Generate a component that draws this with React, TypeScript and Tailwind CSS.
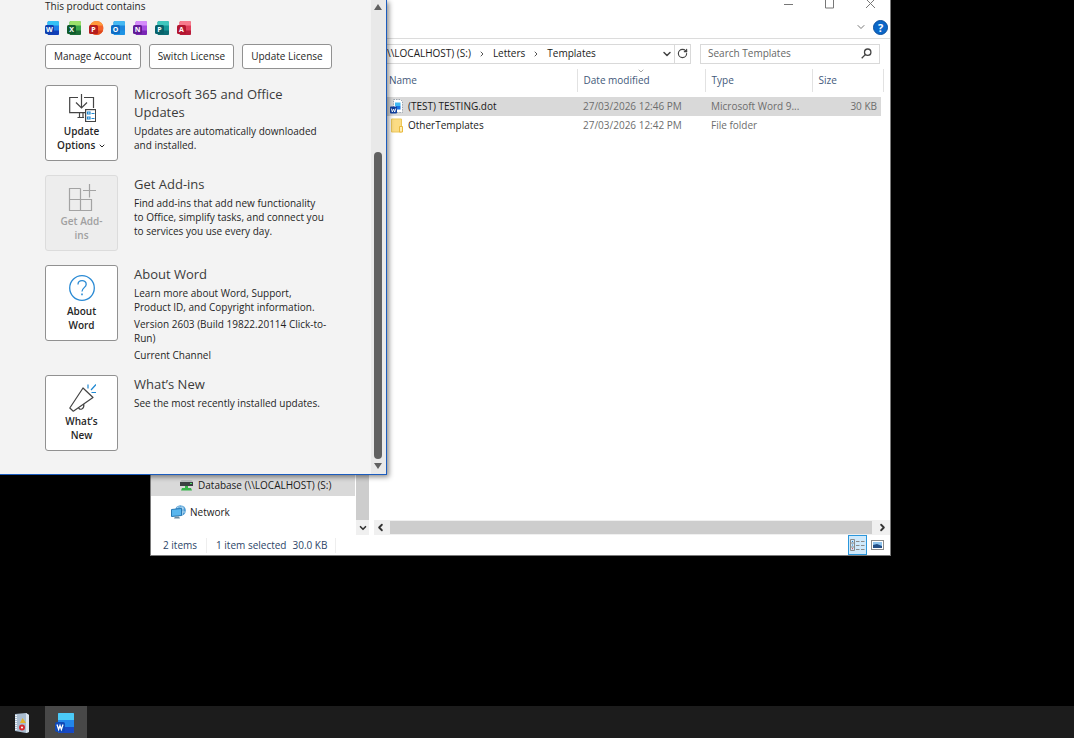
import type { ReactNode } from 'react';
import { ChevronDown, ChevronLeft, ChevronRight, RotateCw } from 'lucide-react';

type OfficeApp = { name: string; letter: string; light: string; mid: string; dark: string; badge: string; round?: boolean };

const officeApps: OfficeApp[] = [
  { name: 'Word', letter: 'W', light: '#35c1f5', mid: '#1f7fe8', dark: '#123fb8', badge: '#0f3fae' },
  { name: 'Excel', letter: 'X', light: '#9be06a', mid: '#3aa94a', dark: '#1b6b35', badge: '#0f5a2b' },
  { name: 'PowerPoint', letter: 'P', light: '#ff9a3d', mid: '#f4622a', dark: '#e04a1e', badge: '#b51d1d', round: true },
  { name: 'Outlook', letter: 'O', light: '#45b8f2', mid: '#1d86dc', dark: '#1e93e4', badge: '#0f6cc4' },
  { name: 'OneNote', letter: 'N', light: '#d48bfa', mid: '#a54ae0', dark: '#7a27b5', badge: '#611b96' },
  { name: 'Publisher', letter: 'P', light: '#3fc7bd', mid: '#159a98', dark: '#0b6c74', badge: '#07626a' },
  { name: 'Access', letter: 'A', light: '#f77a8c', mid: '#e0405c', dark: '#b81c3a', badge: '#b3152f' },
];

function OfficeIcon({ app, className }: { app: OfficeApp; className: string }) {
  const clip = `clip-${app.name}`;
  return (
    <svg viewBox="0 0 16 16" className={className} role="img" aria-label={app.name}>
      <clipPath id={clip}>
        {app.round ? <circle cx="7.500" cy="8" r="7" /> : <rect x="2.500" y="1" width="11.500" height="14" rx="1.500" />}
      </clipPath>
      <g clipPath={`url(#${clip})`}>
        <rect width="16" height="16" fill={app.mid} />
        <rect width="16" height="5.500" fill={app.light} />
        <rect y="10.500" width="16" height="5.500" fill={app.dark} />
      </g>
      <rect x="0" y="5" width="9" height="9" rx="1.500" fill={app.badge} />
      <text x="4.500" y="12.100" textAnchor="middle" fontSize="7" fontWeight="700" fill="#fff" fontFamily="Open Sans, sans-serif">
        {app.letter}
      </text>
    </svg>
  );
}

const UpdateIcon = () => (
  <svg viewBox="0 0 28 28" className="h-7 w-7" fill="none" stroke="#444" strokeWidth="1.200">
    <path d="M10 3.500H1.700v15.200H17M16 3.500h9.500V14M9.500 23.500H16M11.500 19v4.500M15 19v4" />
    <path d="M13.500 0v14M8 8.500l5.500 5.500L19 8.500" />
    <rect x="17.600" y="15.600" width="10" height="12" fill="#fff" />
    <path d="M19.500 18h2.500v2h-2.500zM19.500 23h2.500v2h-2.500zM23.500 19.500h3M23.500 24.500h3" stroke="#1e88d2" />
  </svg>
);

const AddInsIcon = () => (
  <svg viewBox="0 0 28 28" className="h-7 w-7" fill="none" stroke="#a3a3a3" strokeWidth="1.200">
    <path d="M12.500 4.500h-11v22h22v-11h-22M12.500 4.500v22M23.500 15.500v11M21.500 0v13.500M15 6.500h13" />
  </svg>
);

const AboutIcon = () => (
  <svg viewBox="0 0 28 28" className="h-7 w-7" fill="none" stroke="#2a8ad4" strokeWidth="1.300">
    <circle cx="14" cy="14" r="12.300" />
    <path d="M10 10.500c0-5 8.200-5 8.200-.3 0 3.500-4.200 3.400-4.200 7.300" />
    <path d="M14 19.500v1.800" strokeWidth="1.600" />
  </svg>
);

const MegaphoneIcon = () => (
  <svg viewBox="0 0 28 28" className="h-7 w-7" fill="none" stroke="#444" strokeWidth="1.200" strokeLinejoin="round">
    <path d="M15 4L1.800 24l3.500 3.200L25 13.500zM10.500 23.500c1 3.200 6 2 5.300-3.300" />
    <path d="M20 .5v4M23 6l5-5.500M23.500 8.500H28" stroke="#1e88d2" />
  </svg>
);

const tileStyles = {
  normal: 'border-[#919191] bg-white text-[#262626]',
  disabled: 'border-[#dcdcdc] bg-[#ededed] text-[#a0a0a0]',
};

function ProductRow({ icon, label, title, disabled, children }: {
  icon: ReactNode; label: ReactNode; title: ReactNode; disabled?: boolean; children: ReactNode;
}) {
  return (
    <section className="flex items-start gap-4">
      <button
        type="button"
        disabled={disabled}
        className={`flex h-[76px] w-[73px] shrink-0 flex-col items-center rounded-[3px] border pt-2 text-center font-semibold leading-[14px] ${disabled ? tileStyles.disabled : tileStyles.normal}`}
      >
        {icon}
        <span className="mt-[2px]">{label}</span>
      </button>
      <div className="flex min-h-[77px] flex-1 flex-col gap-[3px] whitespace-nowrap leading-[14px]">
        <h2 className="text-[13px] font-medium leading-[18px] text-[#3b3b3b]">{title}</h2>
        {children}
      </div>
    </section>
  );
}

function WordAccountWindow() {
  return (
    <main className="absolute left-0 top-0 flex h-[475px] w-[387px] overflow-hidden border-b border-r border-[#1b5cbe] bg-[#f3f3f3] text-[10px] text-[#1f1f1f] shadow-[2px_2px_5px_rgba(0,0,0,0.45)]">
      <div className="flex-1 pl-[45px]">
        <p className="leading-[13px]">This product contains</p>
        <div className="mt-[7px] flex gap-[6px]">
          {officeApps.map((app) => <OfficeIcon key={app.name} app={app} className="h-4 w-4" />)}
        </div>
        <div className="mt-2 flex gap-2">
          {['Manage Account', 'Switch License', 'Update License'].map((label) => (
            <button key={label} type="button" className="h-[25px] whitespace-nowrap rounded-[3px] border border-[#919191] bg-white px-2">
              {label}
            </button>
          ))}
        </div>
        <div className="mt-4 flex flex-col gap-[13px]">
          <ProductRow
            icon={<UpdateIcon />}
            label={<>Update<br />Options <ChevronDown className="inline h-2 w-2" strokeWidth={3} /></>}
            title={<>Microsoft 365 and Office<br />Updates</>}
          >
            <p>Updates are automatically downloaded<br />and installed.</p>
          </ProductRow>
          <ProductRow icon={<AddInsIcon />} label={<>Get Add-<br />ins</>} title="Get Add-ins" disabled>
            <p>Find add-ins that add new functionality<br />to Office, simplify tasks, and connect you<br />to services you use every day.</p>
          </ProductRow>
          <ProductRow icon={<AboutIcon />} label={<>About<br />Word</>} title="About Word">
            <p>Learn more about Word, Support,<br />Product ID, and Copyright information.</p>
            <p>Version 2603 (Build 19822.20114 Click-to-<br />Run)</p>
            <p>Current Channel</p>
          </ProductRow>
          <ProductRow icon={<MegaphoneIcon />} label={<>What’s<br />New</>} title="What’s New">
            <p>See the most recently installed updates.</p>
          </ProductRow>
        </div>
      </div>
      <div className="flex w-[15px] flex-col items-center bg-[#e9e9e9] pb-[5px] pr-px pt-1">
        <svg viewBox="0 0 8 6" className="h-[6px] w-2" fill="#606060"><path d="M4 0l4 6H0z" /></svg>
        <div className="flex-1" />
        <div className="mb-1 h-[307px] w-2 rounded-full bg-[#606060]" />
        <svg viewBox="0 0 8 6" className="h-[6px] w-2" fill="#606060"><path d="M4 6l4-6H0z" /></svg>
      </div>
    </main>
  );
}

const DotFileIcon = () => (
  <svg viewBox="0 0 14 15" className="h-[15px] w-[14px]">
    <path d="M3.500.5h7l2 2v11h-9z" fill="#fff" stroke="#9aa3ad" strokeDasharray="1.500 1" />
    <rect x="5" y="3.500" width="5.500" height="3.500" fill="#41b9f3" />
    <rect x="6" y="7" width="4.500" height="3.500" fill="#1a73e0" />
    <rect y="7.500" width="7" height="7" rx="1" fill="#103f9f" />
    <path d="M1.300 9.500l1 3.500 1.200-3 1.200 3 1-3.500" fill="none" stroke="#fff" strokeWidth=".9" />
  </svg>
);

const FolderIcon = () => (
  <svg viewBox="0 0 14 15" className="h-[15px] w-[14px]">
    <path d="M1.500 1h10v13h-10z" fill="#fbdc84" stroke="#edc75a" />
    <path d="M9.500 14V8.500h3V14z" fill="#ffeeb5" stroke="#e8b93e" />
  </svg>
);

const DriveIcon = () => (
  <svg viewBox="0 0 13 12" className="h-3 w-[13px]">
    <path d="M1.500 1h10L13 3H0z" fill="#b9bdc0" />
    <rect y="3" width="13" height="4" fill="#3b4043" />
    <rect x="10" y="4" width="2" height="1" fill="#53e36b" />
    <path d="M5 7h3v2h3l1 2.500H1L2 9h3z" fill="#37b34a" />
  </svg>
);

const NetworkIcon = () => (
  <svg viewBox="0 0 15 14" className="h-[14px] w-[15px]">
    <circle cx="9.500" cy="5.500" r="5.300" fill="#4d9bd4" />
    <path d="M6 3c3-3 4 1 7 0M7 8c3-1 4-1 7-1M10 0c3 4 2 7 1 10" stroke="#b8dcf2" fill="none" />
    <path d="M.5 4.500l10-1v7l-10 1z" fill="#58b6ee" stroke="#2879b4" />
    <path d="M3 13.500h6l-1-2H4z" fill="#6b8aa0" />
  </svg>
);

const files = [
  { name: '(TEST) TESTING.dot', date: '27/03/2026 12:46 PM', type: 'Microsoft Word 9...', size: '30 KB', icon: <DotFileIcon />, rowClass: 'bg-[#d9d9d9]' },
  { name: 'OtherTemplates', date: '27/03/2026 12:42 PM', type: 'File folder', size: '', icon: <FolderIcon />, rowClass: '' },
];

function ExplorerToolbar() {
  return (
    <header>
      <div className="flex h-[10px] items-center justify-end gap-[30px] pr-[14px] text-[#777]">
        <button type="button" aria-label="Minimize"><svg viewBox="0 0 11 11" className="h-[11px] w-[11px]" stroke="currentColor"><path d="M1 4.500h9" /></svg></button>
        <button type="button" aria-label="Maximize"><svg viewBox="0 0 11 11" className="h-[11px] w-[11px]" fill="none" stroke="currentColor"><path d="M1.500-1v9h8v-9" /></svg></button>
        <button type="button" aria-label="Close"><svg viewBox="0 0 11 11" className="h-[11px] w-[11px]" stroke="currentColor"><path d="M1-1l9 9M10-1L1 8" /></svg></button>
      </div>
      <div className="flex h-7 items-center justify-end gap-[6px] pr-[2px] pt-[6px]">
        <button type="button" aria-label="Expand the ribbon"><ChevronDown className="h-3 w-3 text-[#777]" strokeWidth={2} /></button>
        <button type="button" aria-label="Help" className="h-[15px] w-[15px] rounded-full border border-[#0a4f9e] bg-[#0b67c8] text-center text-[11px] font-bold leading-[13px] text-white">?</button>
      </div>
      <div className="flex gap-[9px] border-t border-[#dcdcdc] pb-[5px] pr-[10px] pt-[5px]">
        <nav aria-label="Address" className="flex h-5 flex-1 items-center border border-[#d9d9d9] pb-px pl-[235px] text-[#1a1a1a]">
          <span>\\LOCALHOST) (S:)</span>
          <ChevronRight className="mx-[7px] h-2 w-2 text-[#555]" strokeWidth={3} />
          <span>Letters</span>
          <ChevronRight className="mx-[7px] h-2 w-2 text-[#555]" strokeWidth={3} />
          <span>Templates</span>
          <button type="button" aria-label="Previous locations" className="ml-auto mr-px"><ChevronDown className="h-3 w-3 text-[#444]" strokeWidth={3} /></button>
          <button type="button" aria-label="Refresh" className="flex h-[18px] w-4 items-center justify-center border-l border-[#d9d9d9]"><RotateCw className="h-[11px] w-[11px] text-[#444]" strokeWidth={2.5} /></button>
        </nav>
        <label className="flex h-5 w-[180px] items-center border border-[#d9d9d9] px-[7px] pb-px">
          <input aria-label="Search Templates" placeholder="Search Templates" className="w-0 flex-1 bg-transparent outline-none placeholder:text-[#666]" />
          <svg viewBox="0 0 11 11" className="h-[11px] w-[11px]" fill="none" stroke="#444" strokeWidth="1.300"><circle cx="6.700" cy="4.200" r="3.200" /><path d="M4.300 6.600L.7 10.300" /></svg>
        </label>
      </div>
    </header>
  );
}

function FileList() {
  const th = 'relative h-[23px] border-r border-[#e2e2e2] pl-[6px] text-left font-normal';
  return (
    <div className="flex items-start pr-[6px]">
      <table className="flex-1 table-fixed border-collapse">
        <thead className="text-[#43597a]">
          <tr>
            <th className="h-[23px] w-[207px] border-r border-[#e2e2e2] pl-[19px] text-left font-normal">Name</th>
            <th className={`${th} w-32`}>
              Date modified
              <ChevronDown className="absolute left-[59px] top-[-2px] h-2 w-2 text-[#777]" strokeWidth={2} />
            </th>
            <th className={`${th} w-[107px]`}>Type</th>
            <th className="h-[23px] w-[69px] pl-[6px] text-left font-normal">Size</th>
          </tr>
          <tr><td className="h-[5px]" /></tr>
        </thead>
        <tbody className="text-[#6d6d6d]">
          {files.map((file) => (
            <tr key={file.name} className={`h-[19px] ${file.rowClass}`}>
              <td className="pl-5 text-[#1a1a1a]"><span className="flex items-center gap-1">{file.icon}{file.name}</span></td>
              <td className="pl-[6px]">{file.date}</td>
              <td className="pl-[6px]">{file.type}</td>
              <td className="pr-1 text-right">{file.size}</td>
            </tr>
          ))}
        </tbody>
      </table>
      <div className="h-[23px] w-[3px] border-r border-[#e2e2e2]" />
    </div>
  );
}

function ExplorerWindow() {
  return (
    <section aria-label="File Explorer" className="absolute left-[150px] top-0 flex h-[556px] w-[741px] flex-col border-x border-b border-[#7a7a7a] bg-white text-[10px] leading-[15px] text-[#1a1a1a]">
      <ExplorerToolbar />
      <div className="flex min-h-0 flex-1">
        <aside className="flex w-[218px] items-end">
          <div className="flex flex-1 flex-col pb-3">
            <a href="#database" className="flex h-[22px] items-center gap-[5px] bg-[#d9d9d9] pl-[29px]"><DriveIcon />Database (\\LOCALHOST) (S:)</a>
            <a href="#network" className="mt-[5px] flex h-[22px] items-center gap-1 pl-5"><NetworkIcon />Network</a>
          </div>
          <div className="ml-px flex h-[66px] w-[13px] flex-col bg-[#cdcdcd]">
            <div className="mt-auto flex h-[15px] items-center justify-center bg-[#f0f0f0]"><ChevronDown className="h-[10px] w-[10px] text-[#333]" strokeWidth={4} /></div>
          </div>
        </aside>
        <div className="flex flex-1 flex-col pl-px">
          <FileList />
          <div className="ml-1 mt-auto flex h-[15px] items-center bg-[#f0f0f0] pl-px">
            <ChevronLeft className="mr-1 h-[11px] w-[11px] text-[#333]" strokeWidth={4} />
            <div className="h-[13px] flex-1 bg-[#cdcdcd]" />
            <ChevronRight className="ml-[5px] mr-[2px] h-[11px] w-[11px] text-[#333]" strokeWidth={4} />
          </div>
        </div>
      </div>
      <footer className="flex h-5 items-center pl-3 text-[#2c4568]">
        <span className="w-11 border-r border-[#eeeeee]">2 items</span>
        <span className="pl-[9px]">1 item selected</span>
        <span className="border-r border-[#eeeeee] pl-[6px] pr-2">30.0 KB</span>
        <div className="ml-auto flex h-full items-center gap-1 pr-[6px]">
          <button type="button" aria-label="Details view" className="flex h-5 w-[19px] items-center justify-center border border-[#2b97dc] bg-[#cfe9fb]">
            <svg viewBox="0 0 15 12" className="h-3 w-[15px]" fill="none" stroke="#8a8a8a">
              <path d="M.5.5h4v11h-4zM.5 4h4M.5 8h4M6 2.500h3.500M6 6.500h3.500M6 10.500h3.500M11 2.500h3.500M11 6.500h3.500M11 10.500h3.500" />
              <path d="M2 2.500h1M2 6h1" stroke="#2d7fc4" /><path d="M2 9.700h1" stroke="#d33" />
            </svg>
          </button>
          <button type="button" aria-label="Large icons view">
            <svg viewBox="0 0 13 10" className="h-[10px] w-[13px]"><rect x=".5" y=".5" width="12" height="9" fill="#fff" stroke="#8a8a8a" /><rect x="2" y="2" width="9" height="6" fill="#8fc4ee" /><path d="M2 5l4-1 5 2v2H2z" fill="#244f86" /></svg>
          </button>
        </div>
      </footer>
    </section>
  );
}

function Taskbar() {
  return (
    <nav aria-label="Taskbar" className="flex h-8 items-stretch bg-[#1c1c1c]">
      <button type="button" aria-label="Server tool" className="flex w-[45px] items-center justify-center pr-[2px] pt-px">
        <svg viewBox="0 0 16 20" className="h-5 w-4">
          <path d="M1 1l11-1 3 2v17l-3 1-11-2z" fill="#a9bccf" />
          <path d="M12 0l3 2v17l-3 1z" fill="#dbe5ee" />
          <path d="M2 2v16" stroke="#f1f5f8" strokeDasharray="1 1" strokeWidth="2" />
          <path d="M8.500 5L12 10H6z" fill="#e2b32b" />
          <circle cx="8" cy="14.500" r="3" fill="#d42b31" />
          <circle cx="8" cy="14.500" r="1" fill="#fff" />
        </svg>
      </button>
      <button type="button" aria-label="Word document" className="flex w-[42px] items-center justify-center bg-[#484848] pr-[2px] pt-[2px]">
        <svg viewBox="0 0 20 20" className="h-5 w-5">
          <rect x="3" width="16" height="20" rx="1" fill="#2386ea" />
          <path d="M3 7V1q0-1 1-1h14q1 0 1 1v6z" fill="#4bcaf7" />
          <path d="M3 14h16v5q0 1-1 1H4q-1 0-1-1z" fill="#1749c5" />
          <rect y="9" width="10" height="10" rx="2" fill="#0f49b8" />
          <path d="M2 11.500l1.600 5L5 12.500l1.400 4 1.600-5" fill="none" stroke="#fff" strokeWidth="1.300" />
        </svg>
      </button>
    </nav>
  );
}

export default function App() {
  return (
    <div className="flex min-h-screen flex-col bg-black font-['Open_Sans','Noto_Sans',sans-serif]">
      <div className="relative min-h-[560px] flex-1 overflow-hidden">
        <ExplorerWindow />
        <WordAccountWindow />
      </div>
      <Taskbar />
    </div>
  );
}
